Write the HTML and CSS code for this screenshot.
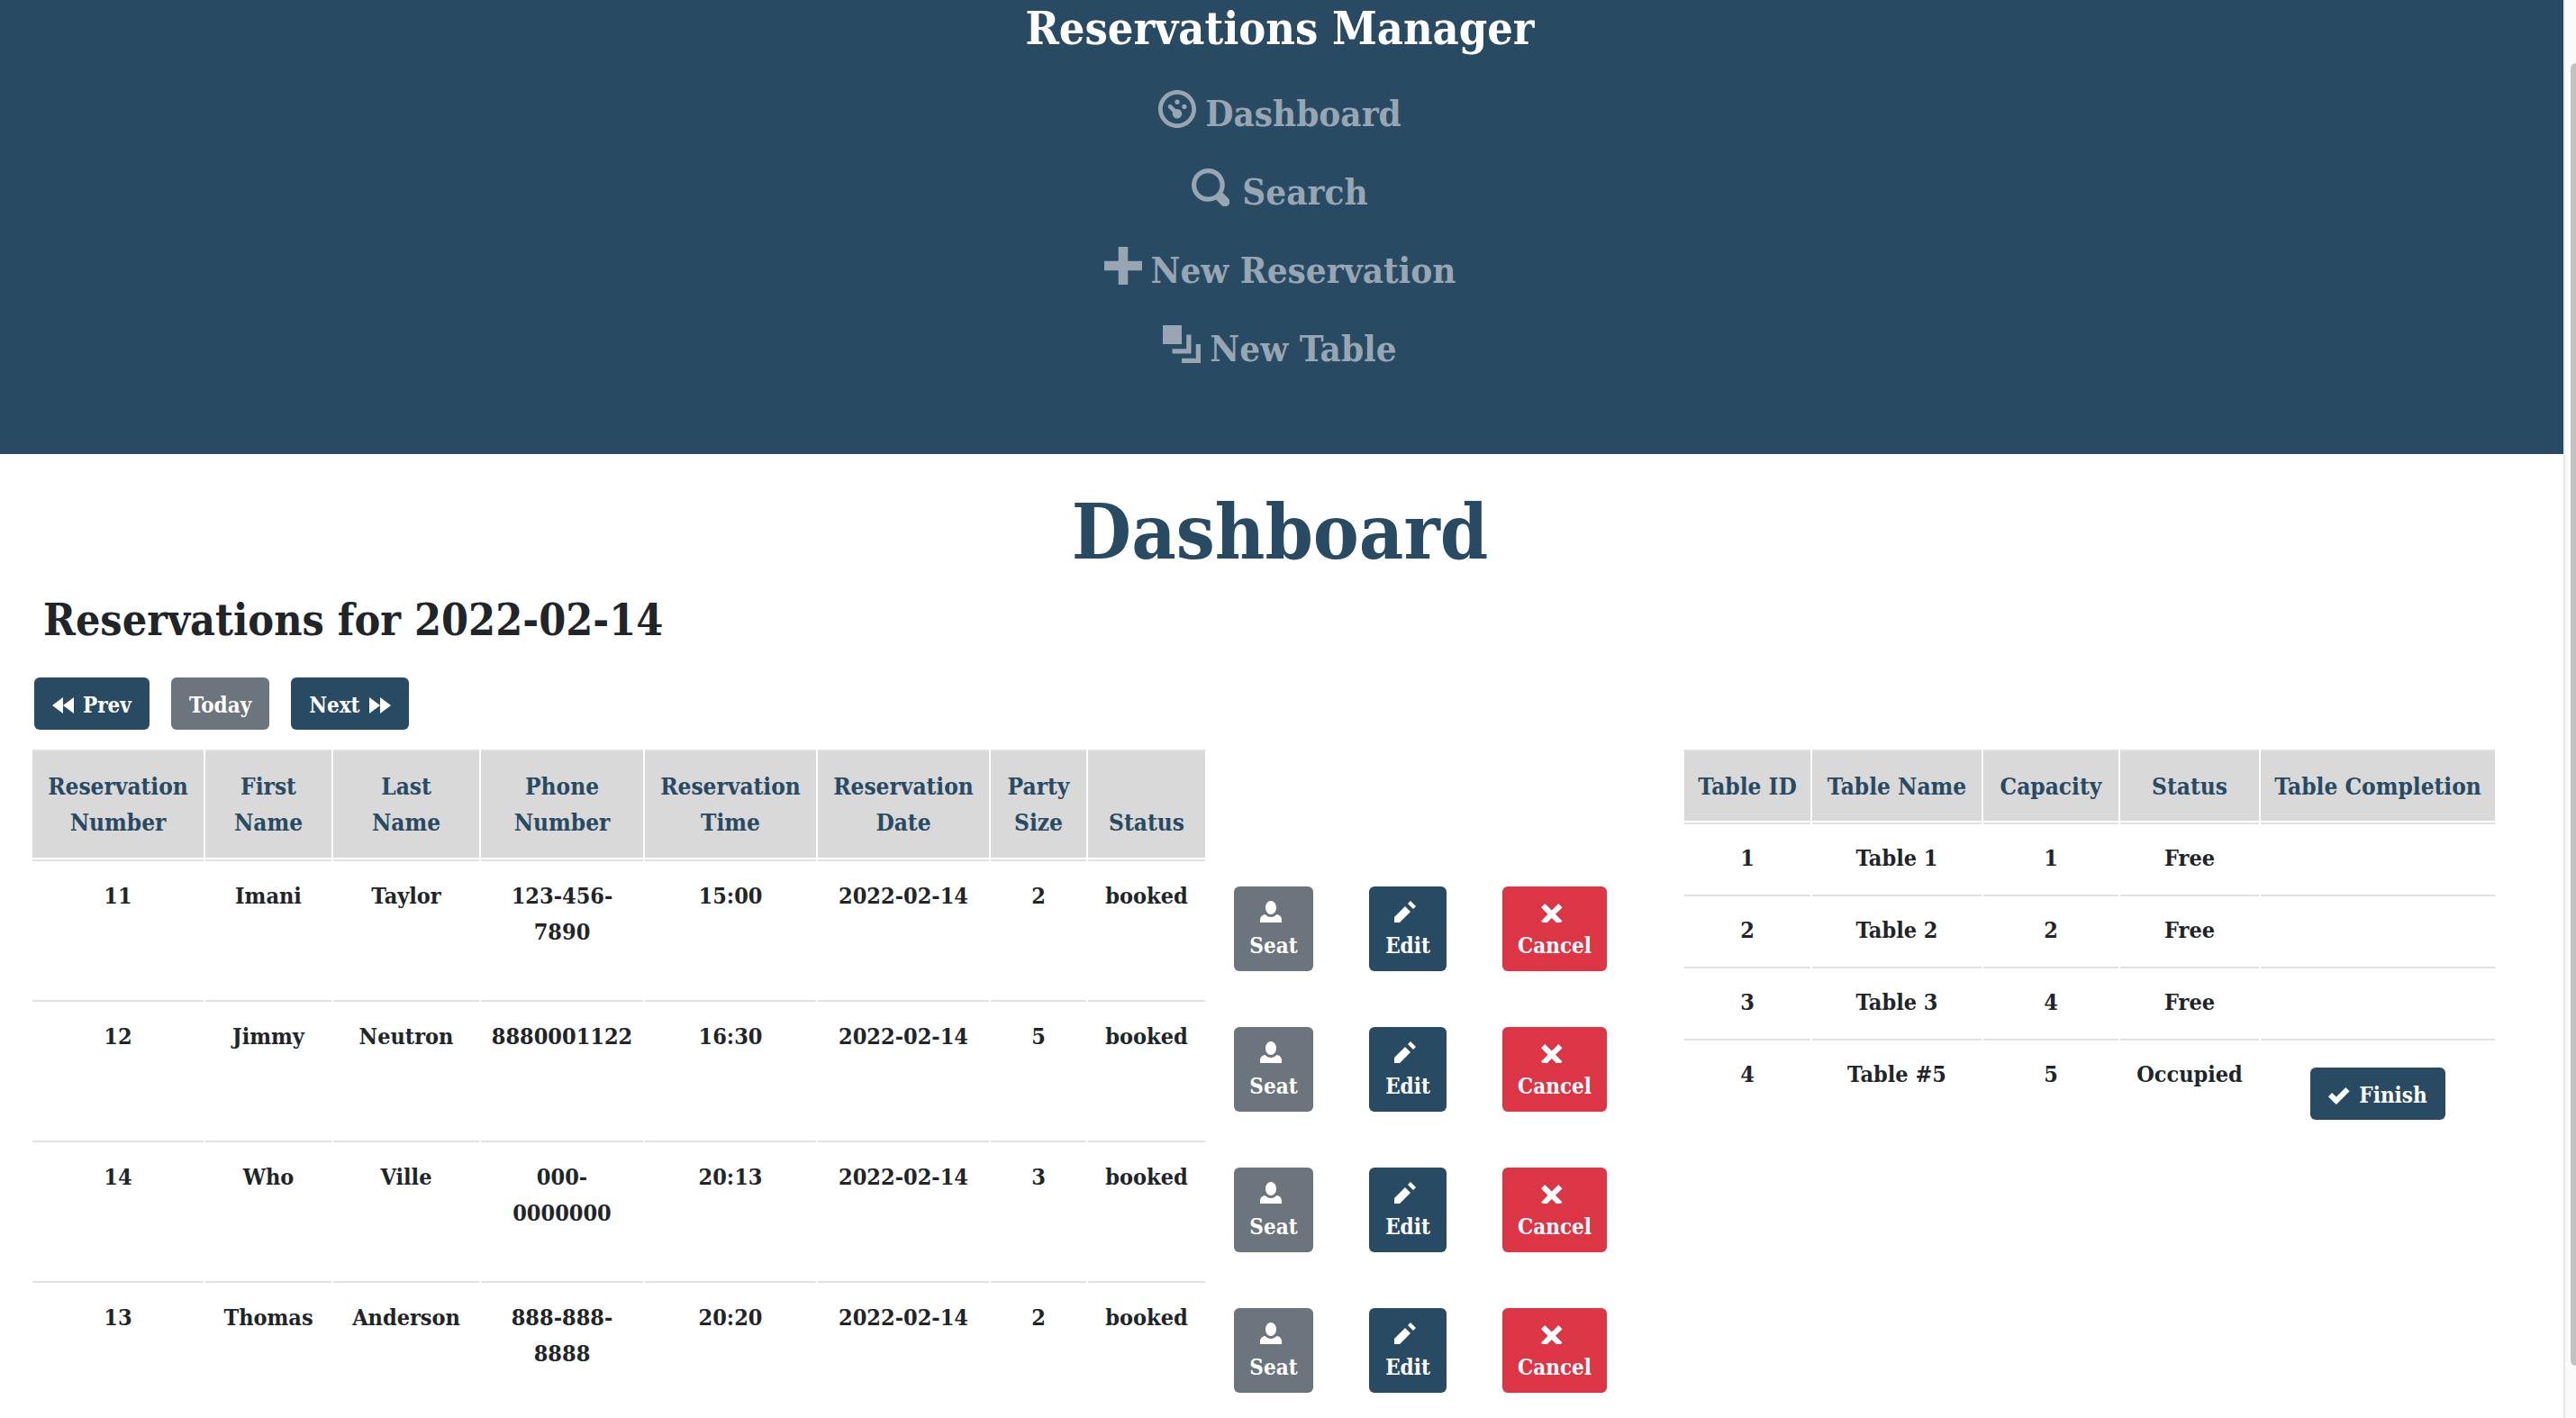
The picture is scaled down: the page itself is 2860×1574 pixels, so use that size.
FILE: index.html
```html
<!DOCTYPE html>
<html lang="en">
<head>
<meta charset="utf-8">
<title>Reservations Manager</title>
<link rel="stylesheet" href="styles.css">
</head>
<body>
<svg class="sprite" aria-hidden="true">
  <symbol id="dial" viewBox="0 0 8 8"><path d="M4 0c-2.2 0-4 1.8-4 4s1.8 4 4 4 4-1.8 4-4-1.8-4-4-4zm0 .9c1.71 0 3.100 1.39 3.100 3.100s-1.390 3.100-3.100 3.100-3.100-1.390-3.100-3.100 1.390-3.100 3.100-3.100z"/><circle cx="4" cy="2.500" r=".5"/><circle cx="5.500" cy="3.500" r=".5"/><circle cx="4" cy="5" r="1"/><path d="M2.500 3.500L4 5" fill="none" stroke="currentColor" stroke-width=".9" stroke-linecap="round"/></symbol>
  <symbol id="magnifier" viewBox="0 0 8 8"><path d="M3.500 0c-1.930 0-3.500 1.570-3.500 3.500s1.570 3.500 3.500 3.500c.59 0 1.170-.14 1.660-.41a1 1 0 0 0 .13.13l1 1a1.020 1.020 0 1 0 1.440-1.440l-1-1a1 1 0 0 0-.16-.13c.27-.49.44-1.060.44-1.660 0-1.930-1.550-3.500-3.500-3.500zm0 1c1.390 0 2.500 1.110 2.500 2.500 0 .66-.24 1.270-.66 1.720l-.03.03a1 1 0 0 0-.13.13c-.44.4-1.040.63-1.690.63-1.390 0-2.500-1.110-2.500-2.500s1.110-2.500 2.500-2.500z"/></symbol>
  <symbol id="plus" viewBox="0 0 8 8"><path d="M3 0v3h-3v2h3v3h2v-3h3v-2h-3v-3h-2z"/></symbol>
  <symbol id="layers" viewBox="0 0 8 8"><path d="M0 0v4h4v-4h-4zm5 2v3h-3v1h4v-4h-1zm2 2v3h-3v1h4v-4h-1z"/></symbol>
  <symbol id="back" viewBox="0 0 8 8"><path d="M4 1l-4 3 4 3v-6zm4 0l-4 3 4 3v-6z"/></symbol>
  <symbol id="forward" viewBox="0 0 8 8"><path d="M0 1v6l4-3-4-3zm4 0v6l4-3-4-3z"/></symbol>
  <symbol id="person" viewBox="0 0 8 8"><path d="M4 0c-1.100 0-2 1.120-2 2.500s.9 2.500 2 2.500 2-1.120 2-2.500-.9-2.500-2-2.500zm-2.090 5c-1.060.05-1.910.92-1.910 2v1h8v-1c0-1.080-.84-1.950-1.910-2-.54.61-1.280 1-2.090 1-.81 0-1.550-.39-2.090-1z"/></symbol>
  <symbol id="pencil" viewBox="0 0 8 8"><path d="M6 0l-1 1 2 2 1-1-2-2zm-2 2l-4 4v2h2l4-4-2-2z"/></symbol>
  <symbol id="cross" viewBox="0 -1 8 8"><path d="M1.410 0l-1.410 1.410.72.72 1.780 1.810-1.780 1.780-.72.69 1.410 1.440.72-.72 1.810-1.810 1.780 1.810.69.72 1.440-1.440-.72-.69-1.810-1.780 1.810-1.810.72-.72-1.440-1.410-.69.72-1.780 1.780-1.810-1.780-.72-.72z"/></symbol>
  <symbol id="check" viewBox="0 -1 8 8"><path d="M6.410 0l-.69.72-2.780 2.780-.81-.78-.72-.72-1.410 1.410.72.72 1.500 1.500.69.72.72-.72 3.500-3.500.72-.72-1.440-1.410z"/></symbol>
</svg>
<div class="shell">
  <div class="content">
    <header class="masthead">
      <a class="brand" href="#">Reservations Manager</a>
      <nav class="menu">
        <a href="#"><svg class="menu-icon"><use href="#dial"/></svg>Dashboard</a>
        <a class="spaced" href="#"><svg class="menu-icon"><use href="#magnifier"/></svg>Search</a>
        <a href="#"><svg class="menu-icon"><use href="#plus"/></svg>New Reservation</a>
        <a href="#"><svg class="menu-icon"><use href="#layers"/></svg>New Table</a>
      </nav>
    </header>
    <main>
      <h1>Dashboard</h1>
      <h2>Reservations for 2022-02-14</h2>
      <div class="pager">
        <button class="btn" type="button"><svg class="icon"><use href="#back"/></svg>Prev</button>
        <button class="btn gray" type="button">Today</button>
        <button class="btn" type="button">Next<svg class="icon"><use href="#forward"/></svg></button>
      </div>
      <div class="tables">
        <table class="reservations">
          <colgroup><col class="w190"><col class="w140"><col class="w162"><col class="w180"><col class="w190"><col class="w190"><col class="w106"><col class="w130"><col class="w148"><col class="w146"><col class="w176"></colgroup>
          <thead>
            <tr><th>Reservation Number</th><th>First Name</th><th>Last<br>Name</th><th>Phone Number</th><th>Reservation Time</th><th>Reservation Date</th><th>Party Size</th><th>Status</th></tr>
          </thead>
          <tbody>
            <tr><td>11</td><td>Imani</td><td>Taylor</td><td>123-456-7890</td><td>15:00</td><td>2022-02-14</td><td>2</td><td>booked</td>
              <td class="action"><button class="btn tall gray" type="button"><svg class="icon"><use href="#person"/></svg>Seat</button></td>
              <td class="action"><button class="btn tall" type="button"><svg class="icon"><use href="#pencil"/></svg>Edit</button></td>
              <td class="action"><button class="btn tall red" type="button"><svg class="icon"><use href="#cross"/></svg>Cancel</button></td></tr>
            <tr><td>12</td><td>Jimmy</td><td>Neutron</td><td>8880001122</td><td>16:30</td><td>2022-02-14</td><td>5</td><td>booked</td>
              <td class="action"><button class="btn tall gray" type="button"><svg class="icon"><use href="#person"/></svg>Seat</button></td>
              <td class="action"><button class="btn tall" type="button"><svg class="icon"><use href="#pencil"/></svg>Edit</button></td>
              <td class="action"><button class="btn tall red" type="button"><svg class="icon"><use href="#cross"/></svg>Cancel</button></td></tr>
            <tr><td>14</td><td>Who</td><td>Ville</td><td>000-0000000</td><td>20:13</td><td>2022-02-14</td><td>3</td><td>booked</td>
              <td class="action"><button class="btn tall gray" type="button"><svg class="icon"><use href="#person"/></svg>Seat</button></td>
              <td class="action"><button class="btn tall" type="button"><svg class="icon"><use href="#pencil"/></svg>Edit</button></td>
              <td class="action"><button class="btn tall red" type="button"><svg class="icon"><use href="#cross"/></svg>Cancel</button></td></tr>
            <tr><td>13</td><td>Thomas</td><td>Anderson</td><td>888-888-8888</td><td>20:20</td><td>2022-02-14</td><td>2</td><td>booked</td>
              <td class="action"><button class="btn tall gray" type="button"><svg class="icon"><use href="#person"/></svg>Seat</button></td>
              <td class="action"><button class="btn tall" type="button"><svg class="icon"><use href="#pencil"/></svg>Edit</button></td>
              <td class="action"><button class="btn tall red" type="button"><svg class="icon"><use href="#cross"/></svg>Cancel</button></td></tr>
          </tbody>
        </table>
        <table class="seating">
          <colgroup><col class="w140"><col class="w188"><col class="w150"><col class="w154"><col class="w260"></colgroup>
          <thead>
            <tr><th>Table ID</th><th>Table Name</th><th>Capacity</th><th>Status</th><th>Table Completion</th></tr>
          </thead>
          <tbody>
            <tr><td>1</td><td>Table 1</td><td>1</td><td>Free</td><td></td></tr>
            <tr><td>2</td><td>Table 2</td><td>2</td><td>Free</td><td></td></tr>
            <tr><td>3</td><td>Table 3</td><td>4</td><td>Free</td><td></td></tr>
            <tr><td>4</td><td>Table #5</td><td>5</td><td>Occupied</td><td class="action bordered"><button class="btn" type="button"><svg class="icon"><use href="#check"/></svg>Finish</button></td></tr>
          </tbody>
        </table>
      </div>
    </main>
  </div>
  <div class="scroll-track"><div class="scroll-thumb"></div></div>
</div>
</body>
</html>
```

FILE: styles.css
```css
* { box-sizing: border-box; }

body {
  margin: 0;
  background: #fff;
  color: #212529;
  font-family: "DejaVu Serif Condensed", "DejaVu Serif", serif;
  font-weight: 700;
  font-size: 25px;
  line-height: 40px;
}

.sprite { display: none; }

svg { fill: currentColor; flex: none; }

.shell {
  display: flex;
  height: 100vh;
  overflow: hidden;
}

.content { flex: 1; min-width: 0; }

/* Masthead */
.masthead {
  display: flex;
  flex-direction: column;
  align-items: center;
  gap: 36px;
  padding: 2px 4px 89px 0;
  background: #284b63;
}

.brand {
  color: #fff;
  font-size: 50px;
  line-height: 60px;
  text-decoration: none;
}

.menu {
  display: flex;
  flex-direction: column;
  align-items: center;
  gap: 31px;
}

.menu a {
  display: flex;
  gap: 10px;
  color: #97a6b2;
  font-size: 40px;
  line-height: 56px;
  text-decoration: none;
}

.menu .spaced { gap: 14px; }

.menu-icon { width: 42px; height: 42px; margin-top: 2px; }

/* Dashboard */
h1 {
  margin: 33px 4px 15px 0;
  color: #284b63;
  font-size: 85px;
  line-height: 106px;
  text-align: center;
}

h2 {
  margin: 0 48px 34px;
  font-size: 48px;
  line-height: 60px;
}

.pager {
  display: flex;
  gap: 24px;
  margin: 0 38px 20px;
}

.btn {
  display: inline-flex;
  align-items: center;
  justify-content: center;
  gap: 10px;
  height: 58px;
  padding: 4px 20px 0;
  border: 0;
  border-radius: 6px;
  background: #284b63;
  color: #fff;
  font: inherit;
  font-size: 24px;
  line-height: 36px;
}

.gray { background: #6c757d; }
.red { background: #dc3545; }

.icon { width: 24px; height: 24px; }

.tall {
  flex-direction: column;
  gap: 8px;
  width: 100%;
  height: 94px;
  padding: 16px 0 10px;
}

.tall .icon { margin-right: 6px; }

/* Tables */
.tables {
  display: flex;
  align-items: flex-start;
  gap: 52px;
  padding: 0 34px;
}

table {
  flex: none;
  border-spacing: 2px;
  table-layout: fixed;
  text-align: center;
}

.reservations { width: 1782px; }
.seating { width: 904px; }

.w106 { width: 106px; }
.w130 { width: 130px; }
.w140 { width: 140px; }
.w146 { width: 146px; }
.w148 { width: 148px; }
.w150 { width: 150px; }
.w154 { width: 154px; }
.w162 { width: 162px; }
.w176 { width: 176px; }
.w180 { width: 180px; }
.w188 { width: 188px; }
.w190 { width: 190px; }
.w260 { width: 260px; }

th, td {
  padding: 19px 10px;
  border-top: 2px solid #dee2e6;
  vertical-align: top;
}

.seating th { padding-bottom: 18px; }
.seating td { padding-top: 18px; padding-bottom: 18px; }

th {
  background: #d9d9d9;
  color: #284b63;
  font-size: 26px;
  vertical-align: bottom;
}

td.action,
.seating td.action { padding: 30px; line-height: 0; }

.reservations .action { border-top: 0; }

/* Scroll bar */
.scroll-track {
  width: 14px;
  padding: 70px 0 58px 6px;
  border-left: 2px solid #e8e8e8;
  background: #fafafa;
}

.scroll-thumb {
  height: 100%;
  border-radius: 8px 0 0 8px;
  background: #c1c1c1;
}
```
